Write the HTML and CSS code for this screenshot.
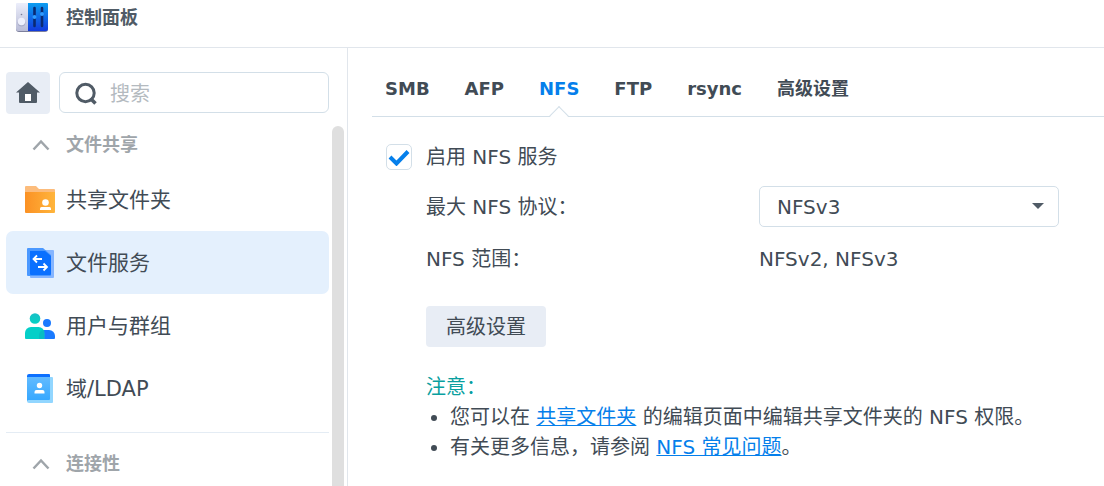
FILE: index.html
```
<!DOCTYPE html>
<html lang="zh-CN">
<head>
    <meta charset="UTF-8">
    <meta name="viewport" content="width=device-width, initial-scale=1.0">
    <title>控制面板</title>
    <link rel="stylesheet" href="styles.css">
</head>
<body>
    <header class="header">
        <svg class="logo" width="34" height="31" viewBox="0 0 34 31">
            <defs>
                <linearGradient id="logoBlue" x1="0" y1="0" x2="0" y2="1">
                    <stop offset="0" stop-color="#0c9df0"/>
                    <stop offset="1" stop-color="#1239dc"/>
                </linearGradient>
                <linearGradient id="logoGray" x1="0" y1="0" x2="0" y2="1">
                    <stop offset="0" stop-color="#eceefb"/>
                    <stop offset="1" stop-color="#b9bcd6"/>
                </linearGradient>
            </defs>
            <rect x="1" y="3" width="32" height="27" rx="3" fill="#7d809c"/>
            <path d="M2 1h11v28H3a2 2 0 0 1-2-2V2a1 1 0 0 1 1-1z" fill="url(#logoGray)"/>
            <path d="M13 1h19a1 1 0 0 1 1 1v25a2 2 0 0 1-2 2H13z" fill="url(#logoBlue)"/>
            <circle cx="6.5" cy="20.5" r="4" fill="#a9acc8"/>
            <circle cx="6.5" cy="19.5" r="3.7" fill="#eef0fc"/>
            <circle cx="6.5" cy="12.5" r=".8" fill="#777b98"/>
            <path d="M19.5 6v18M27 6v18" stroke="#0a2a72" stroke-width="2.6" stroke-linecap="round"/>
            <circle cx="19.5" cy="15" r="2" fill="#2f9bff"/>
            <circle cx="27" cy="12" r="2" fill="#2f9bff"/>
        </svg>
        <h1 class="title">控制面板</h1>
    </header>

    <div class="layout">
        <aside class="sidebar">
            <div class="search-row">
                <button class="home-btn" type="button" aria-label="主页">
                    <svg width="24" height="22" viewBox="0 0 24 22">
                        <path d="M12 0L0 10.500h3V20a1 1 0 0 0 1 1h16a1 1 0 0 0 1-1v-9.500h3z" fill="#505b66"/>
                        <rect x="9" y="12" width="6" height="7" fill="#fff"/>
                    </svg>
                </button>
                <label class="search">
                    <svg width="24" height="24" viewBox="0 0 24 24" fill="none" stroke="#505b66">
                        <circle cx="11.500" cy="11" r="8.700" stroke-width="3"/>
                        <path d="M16.500 16.500l5 5" stroke-width="3.500"/>
                    </svg>
                    <input type="text" placeholder="搜索" aria-label="搜索">
                </label>
            </div>

            <div class="menu">
                <nav class="menu-list">
                    <section class="group">
                        <button class="group-title" type="button">
                            <svg width="18" height="12" viewBox="0 0 18 12"><path d="M1.500 10.500L9 2.500l7.500 8" fill="none" stroke="#9fa5aa" stroke-width="2.500"/></svg>
                            文件共享
                        </button>
                        <a class="item" href="#share">
                            <svg width="32" height="32" viewBox="0 0 32 32">
                                <defs>
                                    <linearGradient id="folder"><stop offset="0" stop-color="#fb9124"/><stop offset="1" stop-color="#ffb53c"/></linearGradient>
                                </defs>
                                <path d="M2 2h10l3 3h15a1 1 0 0 1 1 1v4H1V3a1 1 0 0 1 1-1z" fill="#fcbc7c"/>
                                <path d="M1 8h30v20a1 1 0 0 1-1 1H2a1 1 0 0 1-1-1z" fill="url(#folder)"/>
                                <circle cx="21.500" cy="18.500" r="3.300" fill="#fff"/>
                                <path d="M16 26v-1.500a1.500 1.500 0 0 1 1.500-1.500h8a1.500 1.500 0 0 1 1.500 1.500V26z" fill="#fff"/>
                            </svg>
                            共享文件夹
                        </a>
                        <a class="item active" href="#file">
                            <svg width="32" height="32" viewBox="0 0 32 32">
                                <path d="M7 3h22a1 1 0 0 1 1 1v26a1 1 0 0 1-1 1H7a1 1 0 0 1-1-1V4a1 1 0 0 1 1-1z" fill="#85b5ff"/>
                                <path d="M4 1h15l8 7v20a1 1 0 0 1-1 1H4a1 1 0 0 1-1-1V2a1 1 0 0 1 1-1z" fill="#4a98ff"/>
                                <path d="M6 4h15l6 5v18a1 1 0 0 1-1 1H7a1 1 0 0 1-1-1z" fill="#0a70ff"/>
                                <path d="M18 12H10m3-3.500L9.500 12l3.500 3.500M14 20h9m-3.500-3.500L23 20l-3.500 3.500" fill="none" stroke="#fff" stroke-width="1.800"/>
                            </svg>
                            文件服务
                        </a>
                        <a class="item" href="#user">
                            <svg width="32" height="32" viewBox="0 0 32 32">
                                <defs>
                                    <linearGradient id="teal" x1="0" y1="0" x2="0" y2="1"><stop offset="0" stop-color="#19bfc6"/><stop offset="1" stop-color="#05d2c4"/></linearGradient>
                                </defs>
                                <circle cx="23" cy="13" r="4" fill="#1a7aff"/>
                                <path d="M16 20h9a6 6 0 0 1 6 6v2a1 1 0 0 1-1 1H16z" fill="#1a7aff"/>
                                <circle cx="11" cy="8.500" r="5.300" fill="url(#teal)"/>
                                <path d="M7 17h7.500a6 6 0 0 1 6 6v6H2a1 1 0 0 1-1-1v-5a6 6 0 0 1 6-6z" fill="#04cfc8"/>
                                <path d="M20 20v9h-5v-4a5 5 0 0 1 5-5z" fill="#08bdc2"/>
                            </svg>
                            用户与群组
                        </a>
                        <a class="item" href="#ldap">
                            <svg width="32" height="32" viewBox="0 0 32 32">
                                <defs>
                                    <linearGradient id="book" x1="0" y1="0" x2="0" y2="1"><stop offset="0" stop-color="#62bbff"/><stop offset="1" stop-color="#35a7ff"/></linearGradient>
                                </defs>
                                <path d="M5 4h23a1 1 0 0 1 1 1v24a1 1 0 0 1-1 1H5a2 2 0 0 1-2-2z" fill="#92d6ff"/>
                                <path d="M5 1h20a1 1 0 0 1 1 1v4H3V3a2 2 0 0 1 2-2z" fill="#0c70ff"/>
                                <path d="M3 4h23v22a1 1 0 0 1-1 1H5a2 2 0 0 0-2 1z" fill="url(#book)"/>
                                <circle cx="15.500" cy="12.500" r="2.700" fill="#fff"/>
                                <path d="M10.500 20.500V19a2 2 0 0 1 2-2h6a2 2 0 0 1 2 2v1.500z" fill="#fff"/>
                            </svg>
                            域/LDAP
                        </a>
                    </section>
                    <section class="group">
                        <button class="group-title" type="button">
                            <svg width="18" height="12" viewBox="0 0 18 12"><path d="M1.500 10.500L9 2.500l7.500 8" fill="none" stroke="#9fa5aa" stroke-width="2.500"/></svg>
                            连接性
                        </button>
                    </section>
                </nav>
                <div class="scrollbar"></div>
            </div>
        </aside>

        <main class="content">
            <nav class="tabs">
                <a href="#smb">SMB</a>
                <a href="#afp">AFP</a>
                <a class="active" href="#nfs">NFS</a>
                <a href="#ftp">FTP</a>
                <a href="#rsync">rsync</a>
                <a href="#advanced">高级设置</a>
            </nav>

            <form class="form">
                <label class="check-row">
                    <span class="checkbox">
                        <input type="checkbox" checked>
                        <svg width="22" height="17" viewBox="0 0 22 17"><path d="M2 8l6.500 6.500L20 2.500" fill="none" stroke="#057feb" stroke-width="4"/></svg>
                    </span>
                    启用 NFS 服务
                </label>

                <div class="fields">
                    <div class="row">
                        <label for="protocol">最大 NFS 协议：</label>
                        <div class="select">
                            <select id="protocol">
                                <option>NFSv2</option>
                                <option selected>NFSv3</option>
                                <option>NFSv4</option>
                            </select>
                        </div>
                    </div>
                    <div class="row">
                        <span>NFS 范围：</span>
                        <span>NFSv2, NFSv3</span>
                    </div>
                    <button class="btn" type="button">高级设置</button>

                    <div class="note">
                        <p class="note-title">注意：</p>
                        <ul>
                            <li>您可以在 <a href="#share">共享文件夹</a> 的编辑页面中编辑共享文件夹的 NFS 权限。</li>
                            <li>有关更多信息，请参阅 <a href="#faq">NFS 常见问题</a>。</li>
                        </ul>
                    </div>
                </div>
            </form>
        </main>
    </div>
</body>
</html>
```
FILE: styles.css
```
* {
    box-sizing: border-box;
}
body {
    margin: 0;
    height: 100vh;
    display: flex;
    flex-direction: column;
    overflow: hidden;
    background: #fff;
    color: #414b55;
    font-family: "DejaVu Sans", "Noto Sans CJK SC", sans-serif;
    font-size: 20px;
    line-height: 30px;
}
button, input, select {
    font: inherit;
    color: inherit;
}
button {
    border: 0;
    padding: 0;
    cursor: pointer;
}
svg {
    flex: none;
    display: block;
}

/* 顶部 */
.header {
    display: flex;
    align-items: center;
    gap: 17px;
    padding: 2px 15px 14px;
    border-bottom: 1px solid #e1e6ec;
}
.title {
    margin: 0;
    font-size: 18px;
    font-weight: bold;
    color: #505b66;
}
.layout {
    flex: 1;
    min-height: 0;
    display: flex;
}

/* 侧边栏 */
.sidebar {
    width: 348px;
    flex: none;
    display: flex;
    flex-direction: column;
    padding: 24px 3px 0 6px;
    border-right: 1px solid #e1e6ec;
}
.search-row {
    display: flex;
    gap: 9px;
    padding-right: 15px;
}
.home-btn {
    width: 44px;
    height: 42px;
    flex: none;
    display: flex;
    align-items: center;
    justify-content: center;
    border-radius: 4px;
    background: #e8edf5;
}
.search {
    flex: 1;
    min-width: 0;
    height: 41px;
    display: flex;
    align-items: center;
    gap: 12px;
    padding: 2px 14px 0;
    border: 1px solid #d3dfe8;
    border-radius: 6px;
}
.search input {
    flex: 1;
    min-width: 0;
    padding: 0;
    border: 0;
    outline: 0;
    background: none;
}
.search input::placeholder {
    color: #b4babf;
}
.menu {
    flex: 1;
    min-height: 0;
    display: flex;
    gap: 3px;
}
.menu-list {
    flex: 1;
    overflow: hidden;
}
.scrollbar {
    width: 12px;
    margin-top: 12px;
    border-radius: 6px 6px 0 0;
    background: #dfdfdf;
}
.group {
    padding: 6px 0 12px;
}
.group + .group {
    border-top: 1px solid #e4ecf4;
}
.group-title {
    width: 100%;
    height: 48px;
    display: flex;
    align-items: center;
    gap: 16px;
    padding: 2px 0 0 26px;
    background: none;
    color: #9fa5aa;
    font-size: 18px;
    font-weight: bold;
}
.item {
    height: 63px;
    display: flex;
    align-items: center;
    gap: 10px;
    padding: 1px 0 0 18px;
    border-radius: 7px;
    color: inherit;
    font-size: 21px;
    text-decoration: none;
}
.item.active {
    background: #e4f0fd;
}

/* 内容区 */
.content {
    flex: 1;
    min-width: 0;
    padding: 24px 0 0 24px;
}
.tabs {
    display: flex;
    gap: 35px;
    padding: 2px 13px 12px;
    border-bottom: 1px solid #d3dfe8;
}
.tabs a {
    position: relative;
    color: inherit;
    font-size: 18px;
    font-weight: bold;
    text-decoration: none;
}
.tabs .active {
    color: #057feb;
}
.tabs .active::after {
    content: "";
    position: absolute;
    left: 50%;
    bottom: -19px;
    width: 13px;
    height: 13px;
    margin-left: -7px;
    border: solid #d3dfe8;
    border-width: 1px 0 0 1px;
    background: linear-gradient(135deg, #fff 50%, transparent 50%);
    transform: rotate(45deg);
}
.form {
    padding: 25px 14px;
}
.check-row {
    display: flex;
    align-items: center;
    gap: 14px;
}
.checkbox {
    display: grid;
    place-items: center;
}
.checkbox input,
.checkbox svg {
    grid-area: 1 / 1;
}
.checkbox input {
    appearance: none;
    width: 26px;
    height: 26px;
    margin: 0;
    border: 1px solid #d3dfe8;
    border-radius: 5px;
}
.checkbox svg {
    pointer-events: none;
    visibility: hidden;
}
.checkbox input:checked + svg {
    visibility: visible;
}
.fields {
    padding: 14px 0 0 40px;
}
.row {
    display: grid;
    grid-template-columns: 333px minmax(0, 300px);
    align-items: center;
    margin-bottom: 17px;
}
.select {
    position: relative;
}
.select select {
    appearance: none;
    width: 100%;
    height: 41px;
    padding: 0 40px 0 17px;
    border: 1px solid #d3dfe8;
    border-radius: 5px;
    background: #fff;
}
.select::after {
    content: "";
    position: absolute;
    right: 15px;
    top: 17px;
    border: 6px solid transparent;
    border-top-color: #505b66;
    border-bottom: 0;
    pointer-events: none;
}
.btn {
    height: 41px;
    margin-top: 15px;
    padding: 1px 20px 0;
    border-radius: 4px;
    background: #e8edf5;
}
.note {
    margin-top: 25px;
}
.note-title {
    margin: 0;
    color: #0a9f9f;
}
.note ul {
    margin: 0;
    padding-left: 24px;
}
.note a {
    color: #057feb;
    text-decoration-thickness: 1px;
}
```
